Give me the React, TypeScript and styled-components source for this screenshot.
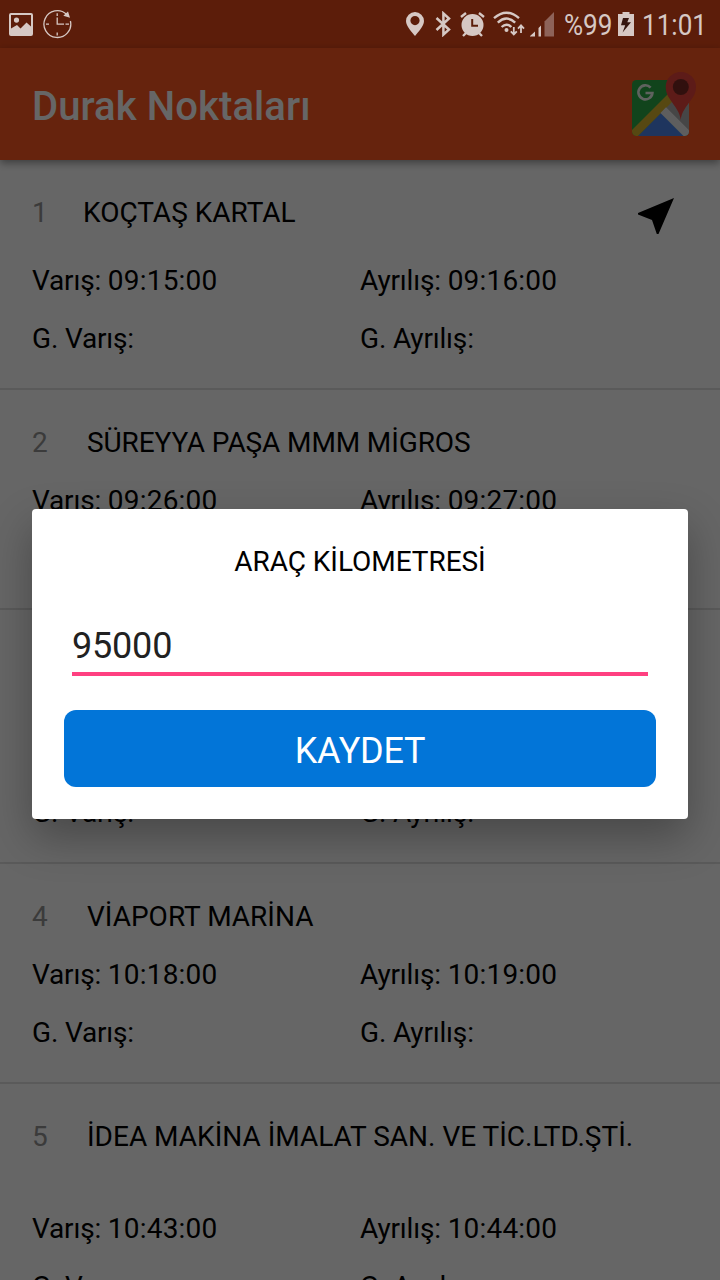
import React from "react";
import styled, { createGlobalStyle } from "styled-components";

const GlobalStyle = createGlobalStyle`
  * { box-sizing: border-box; }
  body {
    margin: 0;
    background: #fff;
    font-family: Roboto, "Liberation Sans", sans-serif;
    overflow: hidden;
  }
`;

const Screen = styled.div`
  position: relative;
  width: 720px;
  height: 1280px;
  overflow: hidden;
  display: flex;
  flex-direction: column;
  background: #fff;
`;

const StatusBar = styled.header`
  flex: none;
  height: 48px;
  background: #e64a19;
  display: flex;
  justify-content: space-between;
  color: #d6c8c4;
`;

const StatusGroup = styled.div<{ $side: "left" | "right" }>`
  position: relative;
  z-index: 3;
  display: flex;
  align-items: center;
  height: 48px;
  padding: ${(p) => (p.$side === "left" ? "0 0 0 9px" : "0 11px 0 0")};
`;

const StatusIcon = styled.svg<{ $gap?: number }>`
  display: block;
  flex: none;
  margin-right: ${(p) => p.$gap ?? 0}px;
`;

const StatusText = styled.div<{ $width: number; $gap?: number }>`
  width: ${(p) => p.$width}px;
  margin-right: ${(p) => p.$gap ?? 0}px;
  height: 48px;
  font-size: 30px;
  line-height: 49px;
  white-space: nowrap;

  span {
    display: inline-block;
    transform: scaleX(0.87);
    transform-origin: left center;
  }
`;

const AppBar = styled.div`
  flex: none;
  position: relative;
  height: 112px;
  padding: 2px 22px 0 32px;
  background: #ff5722;
  box-shadow: 0 3px 8px rgba(0, 0, 0, 0.4);
  display: flex;
  align-items: center;
  justify-content: space-between;
`;

const AppTitle = styled.h1`
  margin: 0;
  padding-top: 4px;
  font-size: 40px;
  line-height: 48px;
  font-weight: 500;
  letter-spacing: 0.1px;
  color: #fff;
`;

const StopList = styled.main`
  flex: none;
`;

const StopRow = styled.section`
  border-bottom: 2px solid #e0e0e0;
  padding: 36px 32px 32px;
  font-size: 28px;
  line-height: 34px;
  color: #000;
`;

const StopHead = styled.div<{ $height: number }>`
  display: flex;
  height: ${(p) => p.$height}px;
  margin-bottom: 24px;
`;

const StopNumber = styled.span<{ $width: number }>`
  width: ${(p) => p.$width}px;
  color: #949494;
`;

const StopName = styled.span<{ $spacing?: number }>`
  flex: 1;
  letter-spacing: ${(p) => p.$spacing ?? 0}px;
`;

const NavIcon = styled.svg`
  display: block;
  width: 36px;
  height: 37px;
  margin: 1px 14px 0 0;
`;

const Times = styled.div`
  display: grid;
  grid-template-columns: 328px 328px;
  row-gap: 24px;
`;

const TimeCell = styled.span`
  height: 34px;
  letter-spacing: -0.17px;
`;

const Clock = styled.span`
  letter-spacing: 0.2px;
`;

const Scrim = styled.div`
  position: absolute;
  inset: 0;
  z-index: 2;
  background: rgba(0, 0, 0, 0.6);
`;

const Dialog = styled.div`
  position: absolute;
  z-index: 4;
  left: 32px;
  top: 509px;
  width: 656px;
  height: 310px;
  padding: 36px 32px 32px;
  border-radius: 4px;
  background: #fff;
  box-shadow: 0 18px 44px rgba(0, 0, 0, 0.3);
  display: flex;
  flex-direction: column;
`;

const DialogTitle = styled.h2`
  margin: 0;
  font-size: 28px;
  line-height: 34px;
  font-weight: 400;
  letter-spacing: -0.05px;
  text-align: center;
  color: #000;
`;

const KmInput = styled.input`
  display: block;
  width: 576px;
  height: 60px;
  margin: 37px 8px 0;
  padding: 4px 0 0;
  border: 0;
  border-bottom: 4px solid #ff4081;
  outline: none;
  background: transparent;
  font: 400 36px/44px Roboto, "Liberation Sans", sans-serif;
  letter-spacing: -0.2px;
  color: #212121;
`;

const SaveButton = styled.button`
  height: 77px;
  margin: 34px 0 0;
  padding: 4px 0 0;
  border: 0;
  border-radius: 12px;
  background: #0275d8;
  color: #fff;
  font: 400 36px/44px Roboto, "Liberation Sans", sans-serif;
  letter-spacing: -0.25px;
`;

interface Stop {
  no: number;
  name: string;
  arrive: string;
  depart: string;
  headHeight: number;
  numberWidth: number;
  spacing?: number;
  next?: boolean;
}

const stops: Stop[] = [
  { no: 1, name: "KOÇTAŞ KARTAL", arrive: "09:15:00", depart: "09:16:00", headHeight: 44, numberWidth: 51, next: true },
  { no: 2, name: "SÜREYYA PAŞA MMM MİGROS", arrive: "09:26:00", depart: "09:27:00", headHeight: 34, numberWidth: 55, spacing: -0.12 },
  { no: 3, name: "", arrive: "", depart: "", headHeight: 68, numberWidth: 55 },
  { no: 4, name: "VİAPORT MARİNA", arrive: "10:18:00", depart: "10:19:00", headHeight: 34, numberWidth: 55 },
  { no: 5, name: "İDEA MAKİNA İMALAT SAN. VE TİC.LTD.ŞTİ.", arrive: "10:43:00", depart: "10:44:00", headHeight: 68, numberWidth: 55 },
];

const PictureIcon = () => (
  <StatusIcon width="24" height="23" viewBox="0 0 24 23" $gap={10}>
    <path
      fill="currentColor"
      fillRule="evenodd"
      d="M2 0H22Q24 0 24 2V21Q24 23 22 23H2Q0 23 0 21V2Q0 0 2 0ZM2 2V15.5L8 12L11.5 15.5L17.5 9.5L22 13.5V2ZM7.5 4.5A2.6 2.6 0 1 1 7.5 9.7A2.6 2.6 0 1 1 7.5 4.5Z"
    />
  </StatusIcon>
);

const ClockIcon = () => (
  <StatusIcon width="29" height="29" viewBox="0 0 29 29" fill="none" stroke="currentColor" strokeWidth="1.3">
    <path d="M23.5 4.3A13.4 13.4 0 1 0 27.4 11" />
    <path d="M14.2 3.3V6M14.2 22.5V25.5M3 14.2H6M22.5 14.2H26" />
    <path d="M14.2 7.5V14.2H21" />
    <path d="M25 1.5L27 7.7L20.3 5.8Z" fill="currentColor" stroke="none" />
  </StatusIcon>
);

const PinIcon = () => (
  <StatusIcon width="18" height="24" viewBox="0 0 18 24" $gap={11}>
    <path
      fill="currentColor"
      fillRule="evenodd"
      d="M9 0A9 9 0 0 1 18 9C18 14.5 12 20 9 24C6 20 0 14.5 0 9A9 9 0 0 1 9 0ZM9 4A4.6 4.6 0 1 0 9 13.2A4.6 4.6 0 1 0 9 4Z"
    />
  </StatusIcon>
);

const BluetoothIcon = () => (
  <StatusIcon width="16" height="26" viewBox="0 0 16 26" $gap={9}>
    <path d="M1.5 7L14 18.5L8.4 23.6V2.4L14 7.5L1.5 19" fill="none" stroke="currentColor" strokeWidth="2.5" />
  </StatusIcon>
);

const AlarmIcon = () => (
  <StatusIcon width="25" height="25" viewBox="0 0 25 25" $gap={8}>
    <circle cx="12.5" cy="13" r="11" fill="currentColor" />
    <path d="M1 5L6 1M24 5L19 1M6 21L3 24M19 21L22 24" stroke="currentColor" strokeWidth="2.4" />
    <path d="M12.2 7V13.8H18" fill="none" stroke="#5c1e0a" strokeWidth="2" />
  </StatusIcon>
);

const WifiIcon = () => (
  <StatusIcon width="32" height="26" viewBox="0 0 32 26" $gap={5}>
    <g fill="none" stroke="currentColor" strokeWidth="2.4">
      <path d="M1 7.2Q13.5 -3.8 26 7.2" />
      <path d="M4.8 11.6Q13.5 3.6 22.2 11.6" />
      <path d="M8.6 16Q13.5 11.4 18.4 16" />
    </g>
    <circle cx="13.5" cy="19" r="2" fill="currentColor" />
    <path d="M20.8 16V23.5M17.8 20.3L20.8 23.4L23.8 20.3M28 22V14.5M25 17.6L28 14.4L31 17.6" fill="none" stroke="currentColor" strokeWidth="1.8" />
  </StatusIcon>
);

const SignalIcon = () => (
  <StatusIcon width="24" height="25" viewBox="0 0 24 25" $gap={10}>
    <path d="M0 24.5V24L5 19.5V24.5ZM8.5 24.5V16L11 13.5V24.5Z" fill="currentColor" />
    <path d="M14.5 24.5V9.5L24 0V24.5Z" fill="#8e6359" />
  </StatusIcon>
);

const BatteryIcon = () => (
  <StatusIcon width="16" height="24" viewBox="0 0 16 24" $gap={8}>
    <path d="M4.5 0H11.5V2H16V24H0V2H4.5Z" fill="currentColor" />
    <path d="M5 6H11L9.3 10.2H13L4.6 20.5L7.2 13.2H3Z" fill="#35150f" />
  </StatusIcon>
);

const MapsIcon = () => (
  <svg width="66" height="66" viewBox="0 0 66 66">
    <defs>
      <clipPath id="tile">
        <rect x="0" y="8" width="57" height="56" rx="4.5" />
      </clipPath>
    </defs>
    <g clipPath="url(#tile)">
      <rect y="8" width="57" height="56" fill="#2caa46" />
      <path d="M57 12V64L28 41Z" fill="#b0b0b0" />
      <path d="M3 67L28.7 40.7L55 67Z" fill="#4b86ea" />
      <path d="M-4 62L40 18L46 24L2 68Z" fill="#d9b32f" />
      <path d="M34 35.3L62 63.3L57 69.5L28.5 41Z" fill="#ececec" />
    </g>
    <path d="M18.6 15.6A7 7 0 1 0 20.4 21H13.5" fill="none" stroke="#eef5ee" strokeWidth="2.6" />
    <path d="M48.7 48C48 40 43 35 38.5 28C35.5 24 33.7 20 33.7 15A15.1 15.1 0 0 1 64 15C64 20 62 24 59 28C54 35 49.5 40 48.7 48Z" fill="#e8443c" />
    <circle cx="48.8" cy="15" r="8" fill="#7c2a25" />
  </svg>
);

export default function App() {
  return (
    <>
      <GlobalStyle />
      <Screen>
        <StatusBar>
          <StatusGroup $side="left">
            <PictureIcon />
            <ClockIcon />
          </StatusGroup>
          <StatusGroup $side="right">
            <PinIcon />
            <BluetoothIcon />
            <AlarmIcon />
            <WifiIcon />
            <SignalIcon />
            <StatusText $width={48} $gap={6}><span>%99</span></StatusText>
            <BatteryIcon />
            <StatusText $width={67}><span>11:01</span></StatusText>
          </StatusGroup>
        </StatusBar>
        <AppBar>
          <AppTitle>Durak Noktaları</AppTitle>
          <MapsIcon />
        </AppBar>
        <StopList>
          {stops.map((stop) => (
            <StopRow key={stop.no}>
              <StopHead $height={stop.headHeight}>
                <StopNumber $width={stop.numberWidth}>{stop.name && stop.no}</StopNumber>
                <StopName $spacing={stop.spacing}>{stop.name}</StopName>
                {stop.next && (
                  <NavIcon viewBox="0 0 36 37">
                    <path d="M36 1L20.5 37H18.8L14 23L0 17.5V16Z" />
                  </NavIcon>
                )}
              </StopHead>
              <Times>
                <TimeCell>{stop.arrive && <>Varış: <Clock>{stop.arrive}</Clock></>}</TimeCell>
                <TimeCell>{stop.depart && <>Ayrılış: <Clock>{stop.depart}</Clock></>}</TimeCell>
                <TimeCell>G. Varış:</TimeCell>
                <TimeCell>G. Ayrılış:</TimeCell>
              </Times>
            </StopRow>
          ))}
        </StopList>
        <Scrim />
        <Dialog role="dialog">
          <DialogTitle>ARAÇ KİLOMETRESİ</DialogTitle>
          <KmInput defaultValue="95000" />
          <SaveButton>KAYDET</SaveButton>
        </Dialog>
      </Screen>
    </>
  );
}
